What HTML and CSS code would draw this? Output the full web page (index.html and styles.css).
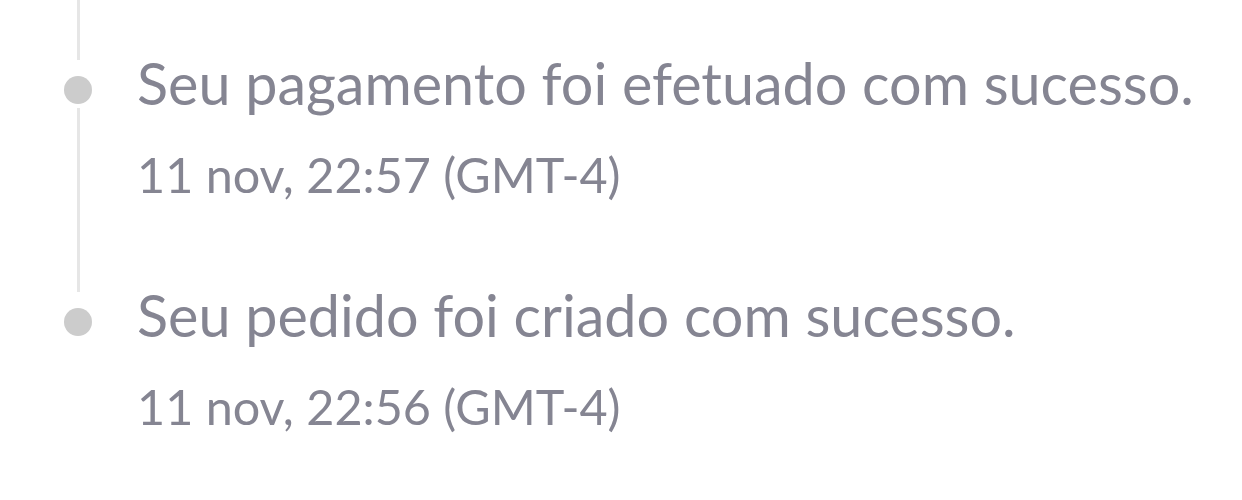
FILE: index.html
```html
<!DOCTYPE html>
<html lang="pt">
<head>
<meta charset="utf-8">
<link rel="stylesheet" href="styles.css">
</head>
<body>
<div class="timeline">
  <div class="tail">
    <div class="marker"><span class="line line-tail"></span></div>
  </div>
  <div class="item">
    <div class="marker"><span class="dot"></span><span class="line"></span></div>
    <div class="content">
      <p class="title">Seu pagamento foi efetuado com sucesso.</p>
      <p class="date">11 nov, 22:57 (GMT-4)</p>
    </div>
  </div>
  <div class="item last">
    <div class="marker"><span class="dot"></span></div>
    <div class="content">
      <p class="title">Seu pedido foi criado com sucesso.</p>
      <p class="date">11 nov, 22:56 (GMT-4)</p>
    </div>
  </div>
</div>
</body>
</html>
```
FILE: styles.css
```css
html, body {
  margin: 0;
  padding: 0;
  background: #ffffff;
}
body {
  font-family: Lato, "Open Sans", sans-serif;
  color: #858592;
}
.timeline {
  display: flex;
  flex-direction: column;
}
.tail {
  display: grid;
  grid-template-columns: 28px 1fr;
  column-gap: 45px;
  padding-left: 64px;
  height: 55px;
}
.item {
  display: grid;
  grid-template-columns: 28px 1fr;
  column-gap: 45px;
  padding-left: 64px;
  height: 232px;
}
.marker {
  display: flex;
  flex-direction: column;
  align-items: center;
}
.dot {
  display: block;
  width: 28px;
  height: 28px;
  border-radius: 50%;
  background: #cccccc;
  margin-top: 21px;
  flex: none;
}
.line {
  display: block;
  width: 3px;
  background: #e6e6e6;
  flex: 1;
  margin: 4px 0 -5px;
}
.line-tail {
  margin: 0 0 -5px;
}
.content {
  display: flex;
  flex-direction: column;
}
.title {
  margin: 0;
  font-size: 57.5px;
  line-height: 56px;
  white-space: nowrap;
}
.date {
  margin: 39px 0 0;
  font-size: 48.5px;
  line-height: 48px;
  white-space: nowrap;
}
```
